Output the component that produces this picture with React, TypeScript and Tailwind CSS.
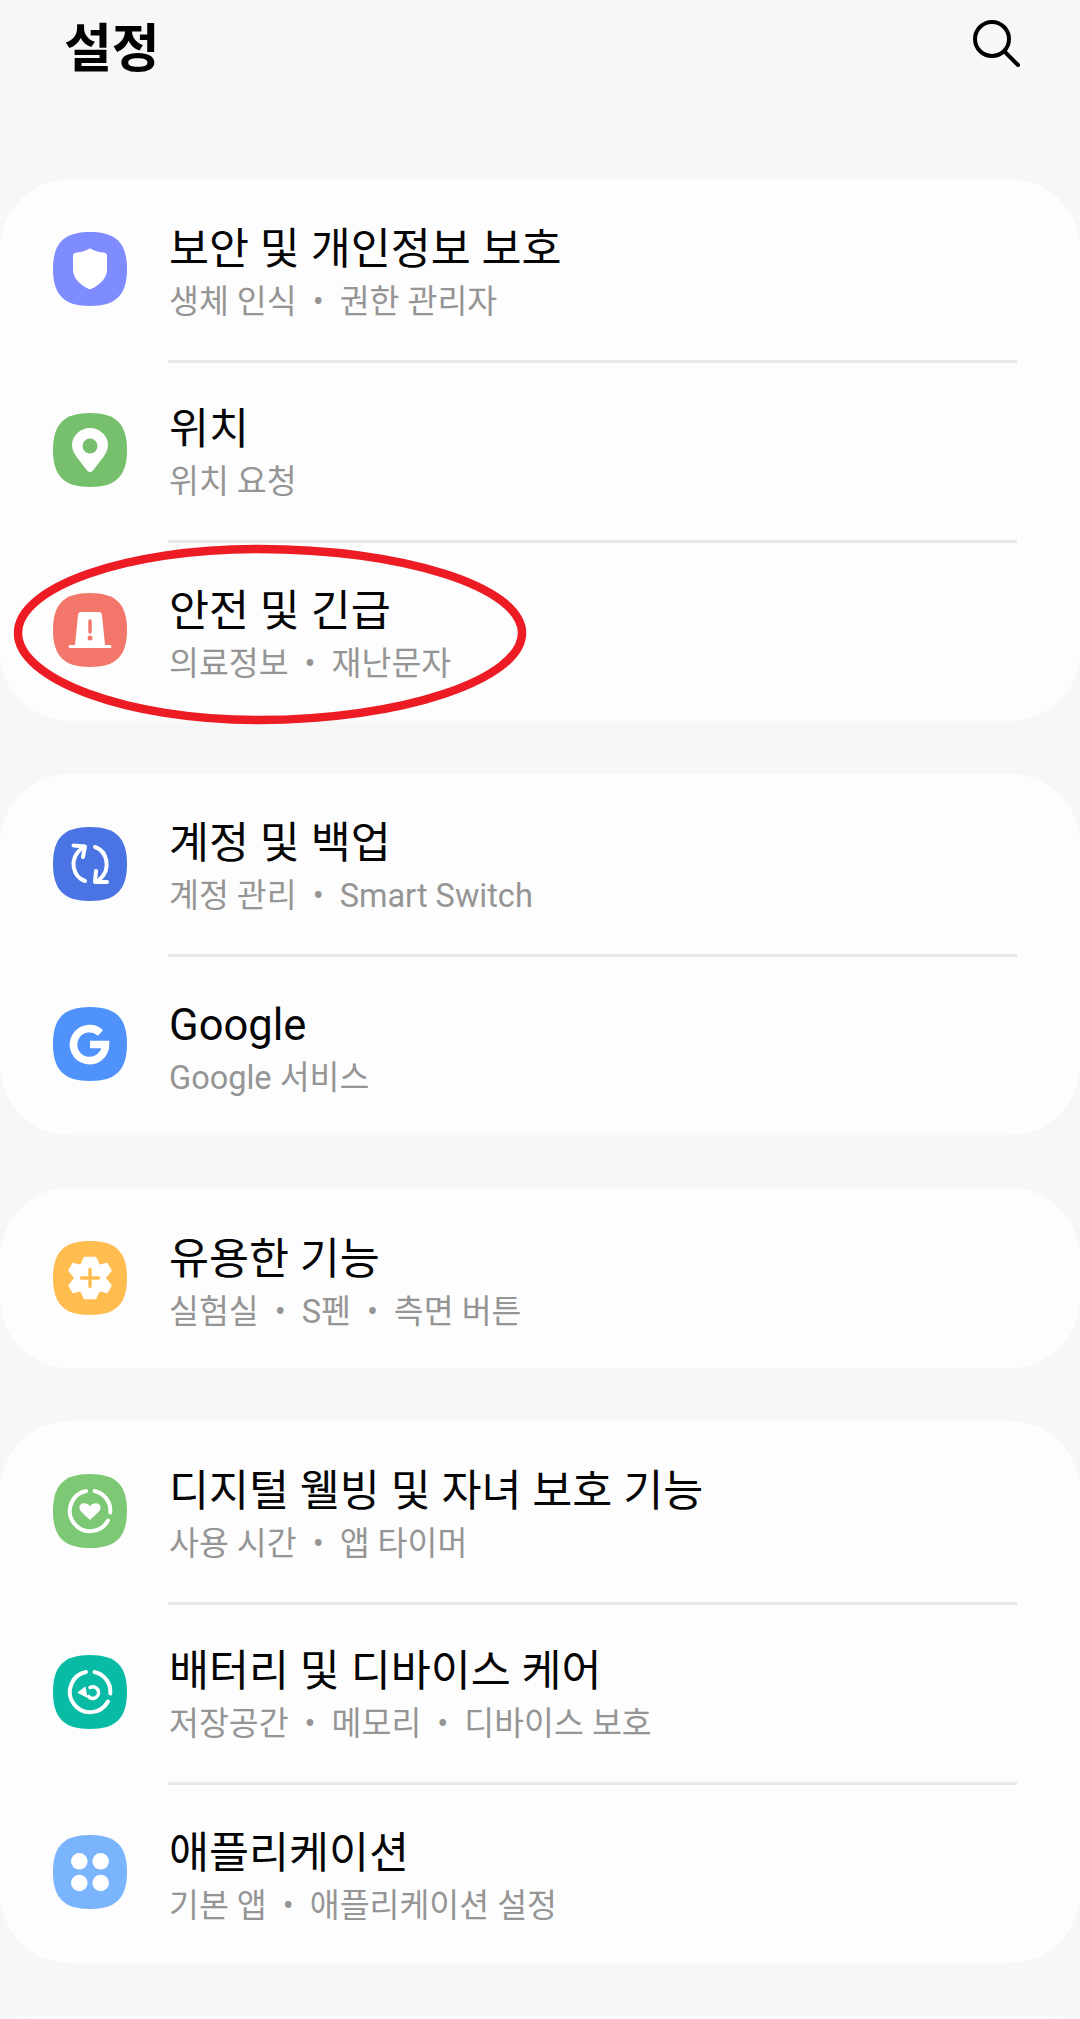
import React from "react";

const SQUIRCLE = "M37 0C63 0 74 11 74 37C74 63 63 74 37 74C11 74 0 63 0 37C0 11 11 0 37 0Z";

function Tile({ color, children }: { color: string; children: React.ReactNode }) {
  return (
    <svg width="74" height="74" viewBox="0 0 74 74" className="shrink-0">
      <path d={SQUIRCLE} fill={color} />
      {children}
    </svg>
  );
}

function Ring() {
  return (
    <g fill="none" stroke="#fff" strokeWidth="4" strokeLinecap="round">
      <path d="M41.5 17A20.3 20.3 0 0 1 57.3 38.5" />
      <path d="M55 46.5A20.3 20.3 0 1 1 33 17" />
    </g>
  );
}

const icons = {
  shield: (
    <Tile color="#7e8cff">
      <path
        fill="#fff"
        d="M37 16.5C38 16.5 40 18 43 19C46 20 50 20.5 52 21C53.5 21.5 54 22 54 24V38C54 47 45 54 38 57Q37 57.5 36 57C29 54 20 47 20 38V24C20 22 20.5 21.5 22 21C24 20.5 28 20 31 19C34 18 36 16.5 37 16.5Z"
      />
    </Tile>
  ),
  pin: (
    <Tile color="#76bf6d">
      <path
        fill="#fff"
        d="M37 15C47 15 55 23 55 32C55 37 52.5 41 50 44.5L39.5 58Q37 60 34.5 58L24 44.5C21.5 41 19 37 19 32C19 23 27 15 37 15Z"
      />
      <circle cx="37" cy="33" r="7.5" fill="#76bf6d" />
    </Tile>
  ),
  beacon: (
    <Tile color="#f27669">
      <path fill="#fff" d="M28 19H46Q48.5 19 49 22L52 52H57Q58.5 52 58.5 53.5Q58.5 55 57 55H17Q15.5 55 15.5 53.5Q15.5 52 17 52H22L25 22Q25.5 19 28 19Z" />
      <path d="M37 28V39" stroke="#f27669" strokeWidth="3.4" strokeLinecap="round" />
      <circle cx="37" cy="45" r="2.5" fill="#f27669" />
    </Tile>
  ),
  sync: (
    <Tile color="#4a74e4">
      <g fill="none" stroke="#fff" strokeWidth="4" strokeLinecap="round" strokeLinejoin="round">
        <path d="M32 54C20 50 15 32 29 21" />
        <path d="M20.5 18.5L32 19.5L30 30" />
        <path d="M42 20C54 24 59 42 46 53" />
        <path d="M43 44L42 55L54 55" />
      </g>
    </Tile>
  ),
  google: (
    <Tile color="#4f92fb">
      <path d="M47.5 26A16 16 0 1 0 52.5 37.5H37" fill="none" stroke="#fff" strokeWidth="7.6" />
    </Tile>
  ),
  gear: (
    <Tile color="#ffbd4f">
      <path
        fill="#fff"
        stroke="#fff"
        strokeWidth="1.5"
        strokeLinejoin="round"
        d="M31.5 16.5H42.5L46.5 24.5L54 22.5L58 29.5L52 37L58 44.5L54 51.5L46.5 49.5L42.5 57.5H31.5L27.5 49.5L20 51.5L16 44.5L22 37L16 29.5L20 22.5L27.5 24.5Z"
      />
      <path d="M28.5 37H45.5M37 28.5V45.5" stroke="#ffbd4f" strokeWidth="3.4" strokeLinecap="round" />
    </Tile>
  ),
  wellbeing: (
    <Tile color="#7dc874">
      <Ring />
      <path
        fill="#fff"
        d="M37 46L28.5 38C25 34.5 26 29.5 31 29.3C33.5 29.3 36 30.5 37 32.5C38 30.5 40.5 29.3 43 29.3C48 29.5 49 34.5 45.5 38Z"
      />
    </Tile>
  ),
  care: (
    <Tile color="#08bba5">
      <Ring />
      <path d="M37 32.5A5.8 5.8 0 1 1 35.5 41.5" fill="none" stroke="#fff" strokeWidth="3.6" strokeLinecap="round" />
      <path d="M25.5 37.5L32 32.5L33.5 41.5Z" fill="#fff" stroke="#fff" strokeWidth="1.5" strokeLinejoin="round" />
    </Tile>
  ),
  apps: (
    <Tile color="#7ab4fc">
      <g fill="#fff">
        <circle cx="26.3" cy="26.3" r="8.3" />
        <circle cx="47.7" cy="26.3" r="8.3" />
        <circle cx="26.3" cy="48" r="8.3" />
        <circle cx="47.7" cy="48" r="8.3" />
      </g>
    </Tile>
  ),
};

type Item = { icon: React.ReactNode; title: string; sub: string[] };

const groups: Item[][] = [
  [
    { icon: icons.shield, title: "보안 및 개인정보 보호", sub: ["생체 인식", "권한 관리자"] },
    { icon: icons.pin, title: "위치", sub: ["위치 요청"] },
    { icon: icons.beacon, title: "안전 및 긴급", sub: ["의료정보", "재난문자"] },
  ],
  [
    { icon: icons.sync, title: "계정 및 백업", sub: ["계정 관리", "Smart Switch"] },
    { icon: icons.google, title: "Google", sub: ["Google 서비스"] },
  ],
  [{ icon: icons.gear, title: "유용한 기능", sub: ["실험실", "S펜", "측면 버튼"] }],
  [
    { icon: icons.wellbeing, title: "디지털 웰빙 및 자녀 보호 기능", sub: ["사용 시간", "앱 타이머"] },
    { icon: icons.care, title: "배터리 및 디바이스 케어", sub: ["저장공간", "메모리", "디바이스 보호"] },
    { icon: icons.apps, title: "애플리케이션", sub: ["기본 앱", "애플리케이션 설정"] },
  ],
];

function Row({ item, last }: { item: Item; last: boolean }) {
  return (
    <div className="flex h-[180.5px] items-center pl-[53px]">
      <div className="w-[115px]">{item.icon}</div>
      <div
        className={`mr-[63px] flex h-[183.5px] flex-1 flex-col justify-center self-start pt-[11px] pl-[1px] ${
          last ? "" : "border-b-[3px] border-[#e8e8e8]"
        }`}
      >
        <div className="text-[43.5px] leading-[54px] text-[#050505]">{item.title}</div>
        <div className="flex text-[32.5px] leading-[50px] text-[#959595]">
          {item.sub.map((s, i) => (
            <React.Fragment key={s}>
              {i > 0 && <span className="mx-[16px]">•</span>}
              <span>{s}</span>
            </React.Fragment>
          ))}
        </div>
      </div>
    </div>
  );
}

export default function App() {
  return (
    <div
      className="relative h-[2019px] overflow-hidden bg-[#f7f7f7]"
      style={{ fontFamily: 'Roboto, "Noto Sans CJK KR", sans-serif' }}
    >
      {/* Title bar */}
      <header className="flex h-[179px] items-start justify-between pl-[64px] pr-[58px]">
        <h1 className="mt-[15px] text-[52px] leading-[70px] font-bold text-black">설정</h1>
        <svg width="50" height="50" viewBox="0 0 50 50" className="mt-[19px]" fill="none" stroke="#000" strokeWidth="4" strokeLinecap="round">
          <circle cx="20" cy="20" r="17" />
          <path d="M32.5 32.5L46 46" />
        </svg>
      </header>

      {/* Settings groups */}
      <main className="flex flex-col gap-[53px]">
        {groups.map((group, g) => (
          <section key={g} className="rounded-[70px] bg-[#fdfdfd]">
            {group.map((item, i) => (
              <Row key={item.title} item={item} last={i === group.length - 1} />
            ))}
          </section>
        ))}
        <section className="h-[60px] rounded-[70px] bg-[#fdfdfd]" />
      </main>

      {/* Red marker drawn around the safety row */}
      <svg className="pointer-events-none absolute left-0 top-0" width="560" height="760" viewBox="0 0 560 760" fill="none">
        <path
          d="M18 633C18 587 126 549 258 549C403 549 522 587 522 633C522 679 403 720 258 720C126 720 18 679 18 633Z"
          stroke="#ed1c24"
          strokeWidth="8.5"
        />
      </svg>
    </div>
  );
}
